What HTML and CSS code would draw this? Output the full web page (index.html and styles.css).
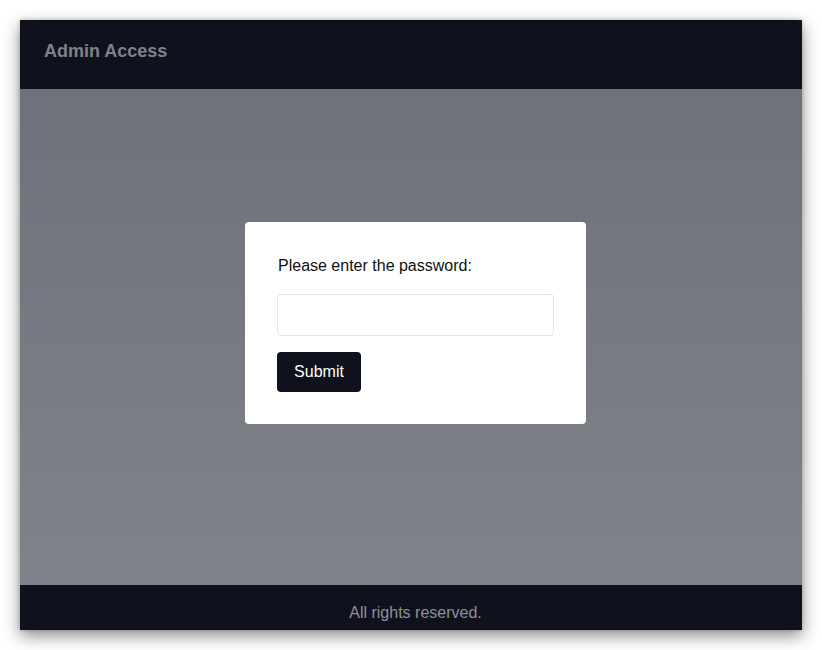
FILE: index.html
```html
<!DOCTYPE html>
<html>

<head>
    <meta charset="utf-8">
    <link rel="stylesheet" href="styles.css">
</head>

<body>
    <div class="window">
        <div class="header">
            <h1>Admin Access</h1>
        </div>

        <div class="main">
            <form class="card">
                <label for="password" class="card-label">Please enter the password:</label>
                <input type="password" id="password" class="card-input">
                <button type="button" class="submit-btn">Submit</button>
            </form>
        </div>

        <div class="footer">All rights reserved.</div>
    </div>
</body>

</html>
```

FILE: styles.css
```css
* {
    margin: 0;
    padding: 0;
    box-sizing: border-box;
}

body {
    font-family: 'Liberation Sans', Arial, sans-serif;
    background: #ffffff;
    color: #111111;
    padding: 20px;
}

.window {
    width: 782px;
    height: 610px;
    display: flex;
    flex-direction: column;
    box-shadow: 0 6px 16px rgba(0, 0, 0, 0.45), 0 0 4px rgba(0, 0, 0, 0.2);
    overflow: hidden;
}

.header {
    height: 69px;
    flex-shrink: 0;
    background: #0f121c;
    padding: 0 24px;
    display: flex;
    align-items: center;
}

.header h1 {
    font-size: 18px;
    font-weight: 700;
    color: #7e8189;
    margin-top: -7px;
}

.main {
    flex: 1;
    background: linear-gradient(180deg, #6d7179 0%, #80838a 100%);
    display: flex;
    align-items: center;
    justify-content: center;
    padding: 0 0 28px 9px;
}

.card {
    width: 341px;
    height: 202px;
    background: #ffffff;
    border-radius: 4px;
    padding: 34px 32px 32px 33px;
    display: flex;
    flex-direction: column;
    align-items: flex-start;
}

.card-label {
    font-size: 16px;
    line-height: 20px;
    color: #111111;
}

.card-input {
    width: 277px;
    height: 42px;
    margin-top: 18px;
    margin-left: -1px;
    border: 1px solid #e2e4e8;
    border-radius: 4px;
    background: #ffffff;
    font-size: 16px;
    padding: 0 10px;
    outline: none;
}

.submit-btn {
    margin-top: 16px;
    margin-left: -1px;
    width: 84px;
    height: 40px;
    border: none;
    border-radius: 4px;
    background: #0f121c;
    color: #ffffff;
    font-family: inherit;
    font-size: 16px;
    cursor: pointer;
}

.footer {
    height: 45px;
    flex-shrink: 0;
    background: #0f121c;
    color: #8f9197;
    font-size: 16px;
    text-align: center;
    padding: 19px 0 0 9px;
}
```
